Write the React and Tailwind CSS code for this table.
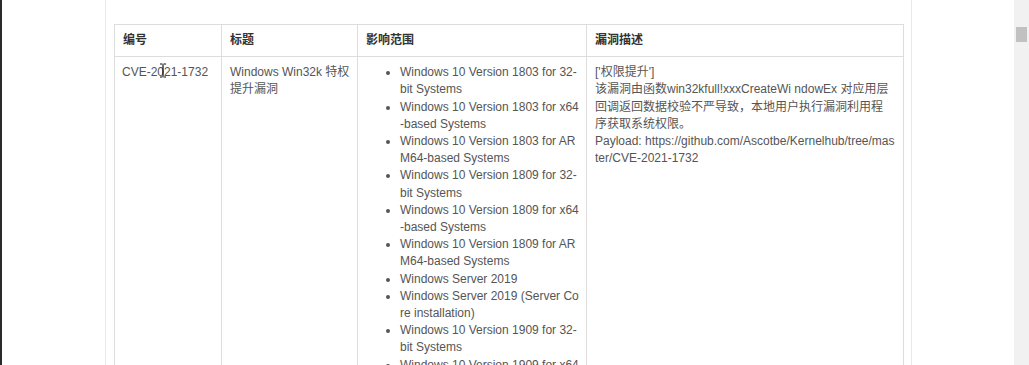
import React from 'react';

const affected = [
    'Windows 10 Version 1803 for 32-bit Systems',
    'Windows 10 Version 1803 for x64-based Systems',
    'Windows 10 Version 1803 for ARM64-based Systems',
    'Windows 10 Version 1809 for 32-bit Systems',
    'Windows 10 Version 1809 for x64-based Systems',
    'Windows 10 Version 1809 for ARM64-based Systems',
    'Windows Server 2019',
    'Windows Server 2019 (Server Core installation)',
    'Windows 10 Version 1909 for 32-bit Systems',
    'Windows 10 Version 1909 for x64-based Systems',
    'Windows 10 Version 1909 for ARM64-based Systems',
    'Windows Server, version 1909 (Server Core installation)',
];

const TextCursor = () => (
    <svg className="absolute left-[44px] top-[6px]" width="8" height="15" viewBox="0 0 8 15">
        <path d="M1 1h2.5M4.5 1H7M4 1.5v12M1 14h2.5M4.5 14H7" stroke="#111" strokeWidth="1.2" fill="none" />
    </svg>
);

const App = () => {
    return (
        <div className="flex h-[365px] w-[1029px] overflow-hidden bg-white font-['Liberation_Sans','Noto_Sans_CJK_SC',sans-serif] text-[12px] leading-[17.2px] text-[#555]">
            {/* dark window edge */}
            <div className="w-[2px] shrink-0 bg-[#2b2b2b]"></div>
            <div className="w-[103px] shrink-0"></div>

            {/* content panel */}
            <div className="w-[807px] shrink-0 border-x border-[#e8e8e8] pl-[8px] pt-[24px]">
                <table className="w-[789px] table-fixed border-collapse border border-[#dddddd]">
                    <colgroup>
                        <col className="w-[107px]" />
                        <col className="w-[136px]" />
                        <col className="w-[229px]" />
                        <col className="w-[317px]" />
                    </colgroup>
                    <thead>
                        <tr>
                            <th className="border border-[#dddddd] px-[8px] py-[7px] text-left font-bold text-[#333]">编号</th>
                            <th className="border border-[#dddddd] px-[8px] py-[7px] text-left font-bold text-[#333]">标题</th>
                            <th className="border border-[#dddddd] px-[8px] py-[7px] text-left font-bold text-[#333]">影响范围</th>
                            <th className="border border-[#dddddd] px-[8px] py-[7px] text-left font-bold text-[#333]">漏洞描述</th>
                        </tr>
                    </thead>
                    <tbody>
                        <tr>
                            <td className="relative border border-[#dddddd] px-[7px] py-[7px] align-top">
                                CVE-2021-1732
                                <TextCursor />
                            </td>
                            <td className="border border-[#dddddd] px-[8px] py-[7px] align-top">
                                <div className="w-[122px]">Windows Win32k 特权提升漏洞</div>
                            </td>
                            <td className="border border-[#dddddd] py-[7px] pl-[9px] align-top">
                                <ul className="list-disc pl-[33px]">
                                    {affected.map((item) => (
                                        <li key={item} className="w-[181px] break-all">{item}</li>
                                    ))}
                                </ul>
                            </td>
                            <td className="border border-[#dddddd] px-[8px] py-[7px] align-top">
                                <div className="w-[299px] break-all">
                                    <div>['权限提升']</div>
                                    <div>该漏洞由函数win32kfull!xxxCreateWi ndowEx 对应用层回调返回数据校验不严导致，本地用户执行漏洞利用程序获取系统权限。</div>
                                    <div className="w-[310px]">
                                        Payload: https://github.com/Ascotbe/Kernelhub/tree/mas<br />ter/CVE-2021-1732
                                    </div>
                                </div>
                            </td>
                        </tr>
                    </tbody>
                </table>
            </div>

            <div className="flex-1"></div>

            {/* scrollbar */}
            <div className="w-[15px] shrink-0 bg-[#f1f1f1] pl-[2px] pt-[27px]">
                <div className="h-[15px] w-[11px] bg-[#c1c1c1]"></div>
            </div>
        </div>
    );
};

export default App;
